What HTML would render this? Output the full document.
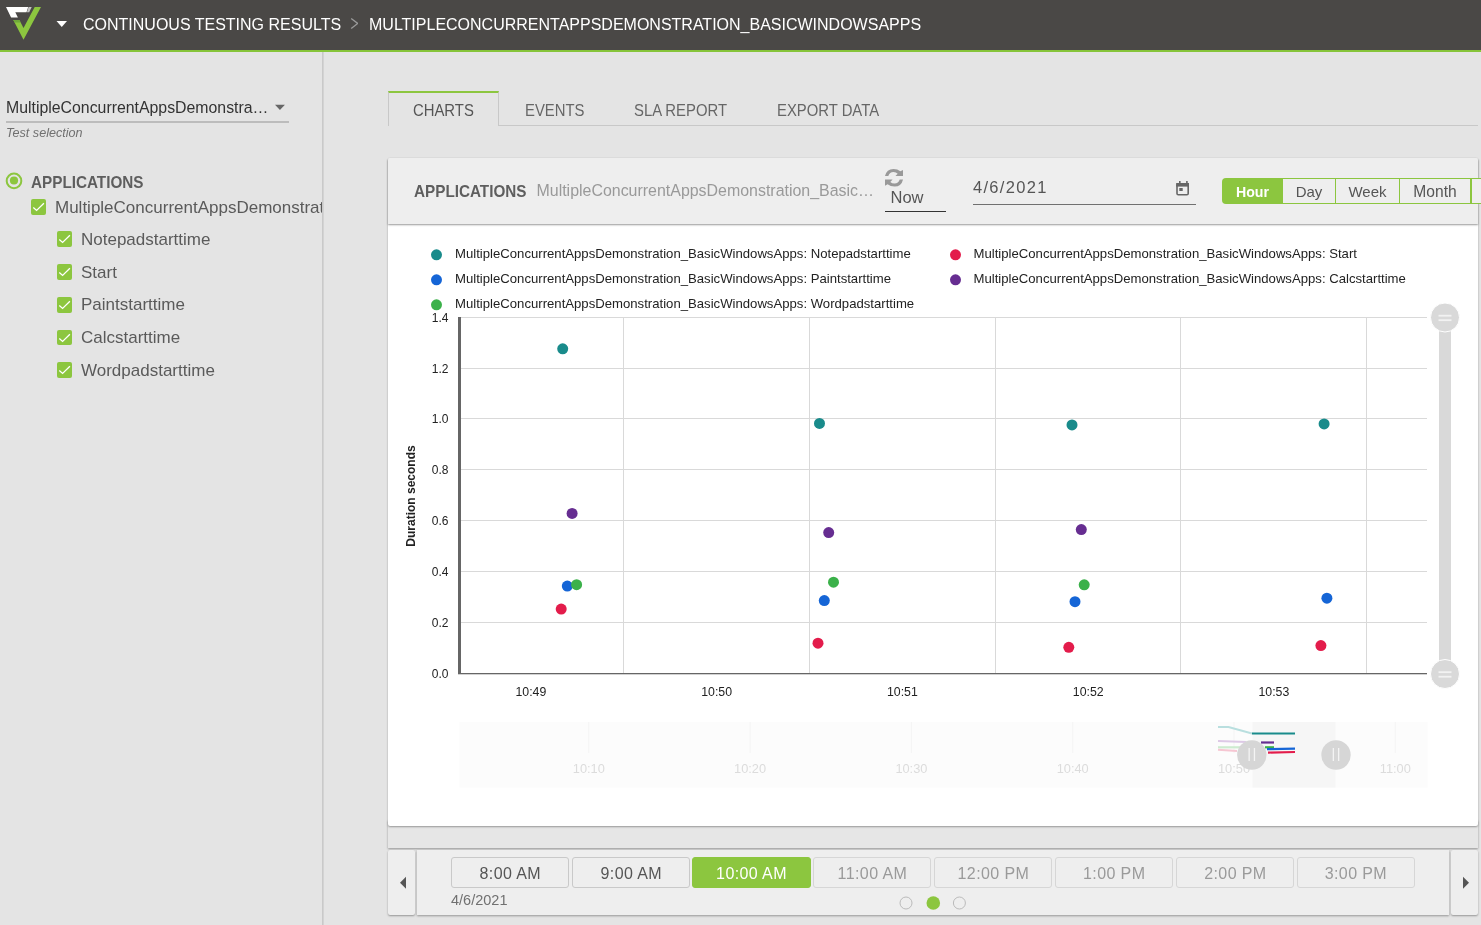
<!DOCTYPE html>
<html><head><meta charset="utf-8">
<style>
*{box-sizing:border-box;margin:0;padding:0}
html,body{width:1481px;height:925px;overflow:hidden;will-change:transform;background:#e4e4e4;font-family:"Liberation Sans",sans-serif;position:relative}
.a{position:absolute;white-space:nowrap}
.ht{color:#fff;font-size:16px;top:16px;line-height:18px}
.cb{width:15px;height:15.6px;background:#8cc63f;border-radius:2px}
.cb svg{position:absolute;left:0;top:0}
.si{font-size:17px;color:#5a5a5a;line-height:19px}
.tab{font-size:16.5px;color:#666;line-height:18px;top:101px;transform:scaleX(.9);transform-origin:0 0}
.tb{top:857px;height:31px;width:118px;border:1px solid #c9c9c9;border-radius:3px;background:#eeeeee;color:#555;font-size:16px;letter-spacing:0.4px;line-height:31px;text-align:center}
.tb.dis{color:#9a9a9a;border-color:#d6d6d6}
.pb{top:178px;height:26px;border:1px solid #8cc63f;border-left:none;background:#eeeeee;color:#555;font-size:15px;line-height:26px;text-align:center}
</style></head><body>
<div class="a" style="left:0;top:0;width:1481px;height:50px;background:#4a4846"></div>
<div class="a" style="left:0;top:50px;width:1481px;height:2px;background:#86c43a"></div>
<svg class="a" style="left:0;top:0" width="60" height="50" viewBox="0 0 60 50">
  <polygon points="6,7 28.2,7 26.5,12.2 15.3,12.2 17.9,17.6 11.1,17.6" fill="#fff"/><polygon points="28.6,7 31.7,7 29.2,12.2 26.9,12.2" fill="#c4c4c4"/>
  <polygon points="34.7,7 41,7 23.5,39.8 13.3,20 19.4,20 23.5,28" fill="#8cc63f"/><polygon points="13.3,20 19.4,20 20.7,22.6 14.6,22.6" fill="#6fa83a"/>
</svg>
<svg class="a" style="left:56px;top:20px" width="12" height="8"><polygon points="0.5,1 11,1 5.75,7" fill="#fff"/></svg>
<div class="a ht" style="left:83px">CONTINUOUS TESTING RESULTS</div>
<svg class="a" style="left:348px;top:17px" width="10" height="14"><polyline points="3.2,1.4 9.7,6.4 3.2,11.6" fill="none" stroke="#9a9a9a" stroke-width="1.3"/></svg>
<div class="a ht" style="left:369px">MULTIPLECONCURRENTAPPSDEMONSTRATION_BASICWINDOWSAPPS</div>
<div class="a" style="left:322px;top:52px;width:2px;height:873px;background:linear-gradient(90deg,#c4c4c4,#d8d8d8)"></div>
<div class="a si" style="left:6px;top:98px;color:#333;font-size:15.85px">MultipleConcurrentAppsDemonstra…</div>
<svg class="a" style="left:274px;top:104px" width="12" height="7"><polygon points="1,0.8 10.9,0.8 5.95,5.9" fill="#666"/></svg>
<div class="a" style="left:6px;top:121px;width:283px;height:2px;background:#bcbcbc"></div>
<div class="a" style="left:6px;top:126px;font-size:12.6px;line-height:14px;font-style:italic;color:#707070">Test selection</div>
<svg class="a" style="left:5px;top:171.5px" width="18" height="18"><circle cx="9" cy="8.9" r="7.3" fill="none" stroke="#8cc63f" stroke-width="2"/><circle cx="9" cy="8.5" r="4.1" fill="#8cc63f"/></svg>
<div class="a si" style="left:31px;top:172.5px;font-weight:bold;font-size:16.5px;color:#5e5e5e;transform:scaleX(.925);transform-origin:0 0">APPLICATIONS</div>
<div class="a" style="left:0;top:190px;width:322px;height:30px;overflow:hidden"><div class="a cb" style="left:31px;top:9px"><svg width="15" height="15"><polyline points="2.3,8.4 5.6,11.4 12.9,4.3" fill="none" stroke="#fff" stroke-width="1.3"/></svg></div><div class="a si" style="left:55px;top:8px">MultipleConcurrentAppsDemonstration_BasicWindowsApps</div></div>
<div class="a cb" style="left:57px;top:231.2px"><svg width="15" height="15"><polyline points="2.3,8.4 5.6,11.4 12.9,4.3" fill="none" stroke="#fff" stroke-width="1.3"/></svg></div>
<div class="a si" style="left:81px;top:230.4px">Notepadstarttime</div>
<div class="a cb" style="left:57px;top:264.0px"><svg width="15" height="15"><polyline points="2.3,8.4 5.6,11.4 12.9,4.3" fill="none" stroke="#fff" stroke-width="1.3"/></svg></div>
<div class="a si" style="left:81px;top:263.2px">Start</div>
<div class="a cb" style="left:57px;top:297.0px"><svg width="15" height="15"><polyline points="2.3,8.4 5.6,11.4 12.9,4.3" fill="none" stroke="#fff" stroke-width="1.3"/></svg></div>
<div class="a si" style="left:81px;top:295.4px">Paintstarttime</div>
<div class="a cb" style="left:57px;top:329.5px"><svg width="15" height="15"><polyline points="2.3,8.4 5.6,11.4 12.9,4.3" fill="none" stroke="#fff" stroke-width="1.3"/></svg></div>
<div class="a si" style="left:81px;top:327.9px">Calcstarttime</div>
<div class="a cb" style="left:57px;top:362.0px"><svg width="15" height="15"><polyline points="2.3,8.4 5.6,11.4 12.9,4.3" fill="none" stroke="#fff" stroke-width="1.3"/></svg></div>
<div class="a si" style="left:81px;top:361.2px">Wordpadstarttime</div>
<div class="a" style="left:388px;top:91px;width:111px;height:35px;border:1px solid #c8c8c8;border-bottom:none;border-top:2px solid #8cc63f;background:#e4e4e4"></div>
<div class="a" style="left:499px;top:125px;width:979px;height:1px;background:#c8c8c8"></div>
<div class="a tab" style="left:412.5px;color:#555">CHARTS</div>
<div class="a tab" style="left:525px">EVENTS</div>
<div class="a tab" style="left:634px">SLA REPORT</div>
<div class="a tab" style="left:777px">EXPORT DATA</div>
<div class="a" style="left:388px;top:820px;width:1090px;height:28px;background:#e6e6e6;box-shadow:0 1px 2px rgba(0,0,0,.35)"></div>
<div class="a" style="left:388px;top:158px;width:1090px;height:668px;background:#fff;box-shadow:0 1px 2px rgba(0,0,0,.35);border-radius:2px"></div>
<div class="a" style="left:388px;top:158px;width:1090px;height:66px;background:#eeeeee;box-shadow:0 1px 2px rgba(0,0,0,.4);border-radius:2px 2px 0 0"></div>
<div class="a" style="left:414px;top:182px;font-weight:bold;font-size:16.5px;line-height:18px;color:#5e5e5e;transform:scaleX(.925);transform-origin:0 0">APPLICATIONS</div>
<div class="a" style="left:536.5px;top:182px;font-size:15.95px;line-height:18px;color:#999">MultipleConcurrentAppsDemonstration_Basic…</div>
<svg class="a" style="left:878px;top:164px" width="32" height="28" viewBox="0 0 32 28">
<path id="rf" d="M6.97 12.12 Q8.6 5 15.45 5 Q19.6 5 22.4 7.3 L25 5.9 L25 12.12 L17.4 12.12 L19.7 9.7 Q18 8.03 15.45 8.03 Q11.6 8.1 10.3 12.12 Z" fill="#999"/>
<path d="M6.97 12.12 Q8.6 5 15.45 5 Q19.6 5 22.4 7.3 L25 5.9 L25 12.12 L17.4 12.12 L19.7 9.7 Q18 8.03 15.45 8.03 Q11.6 8.1 10.3 12.12 Z" fill="#999" transform="rotate(180 16 13.8)"/>
</svg>
<div class="a" style="left:890.5px;top:188px;font-size:16.5px;line-height:18px;color:#555">Now</div>
<div class="a" style="left:885px;top:211px;width:61px;height:1px;background:#333"></div>
<div class="a" style="left:973px;top:178px;font-size:16.5px;letter-spacing:1.3px;line-height:18px;color:#555">4/6/2021</div>
<div class="a" style="left:973px;top:204px;width:223px;height:1px;background:#707070"></div>
<svg class="a" style="left:1175px;top:180px" width="16" height="17" viewBox="0 0 16 17">
<rect x="2" y="3.8" width="11.2" height="10.9" rx="1.3" fill="none" stroke="#666" stroke-width="1.6"/>
<rect x="1.2" y="3" width="12.8" height="3.6" fill="#666"/>
<rect x="4" y="1" width="1.6" height="3" fill="#666"/><rect x="11.1" y="1" width="1.6" height="3" fill="#666"/>
<rect x="4.3" y="8" width="3.4" height="3" fill="#666"/>
</svg>
<div class="a" style="left:1222px;top:178px;width:61px;height:26px;background:#8cc63f;border-radius:4px 0 0 4px"></div><div class="a" style="left:1222px;top:178px;width:61px;height:26px;color:#fff;font-weight:bold;font-size:15px;line-height:27px;text-align:center;transform:scaleX(.943)">Hour</div>
<div class="a pb" style="left:1283px;width:53px">Day</div>
<div class="a pb" style="left:1336px;width:64px">Week</div>
<div class="a pb" style="left:1400px;width:71px;font-size:15.6px">Month</div>
<div class="a pb" style="left:1471px;width:20px;border-left:1px solid #8cc63f"></div>
<svg class="a" style="left:0;top:0" width="1481" height="925" viewBox="0 0 1481 925" font-family='"Liberation Sans",sans-serif'>
<circle cx="436.5" cy="254.8" r="5.5" fill="#198b8b"/>
<text x="455" y="258" font-size="13.15" fill="#222">MultipleConcurrentAppsDemonstration_BasicWindowsApps: Notepadstarttime</text>
<circle cx="955.5" cy="254.8" r="5.5" fill="#e31c4b"/>
<text x="973.5" y="258" font-size="13.15" fill="#222">MultipleConcurrentAppsDemonstration_BasicWindowsApps: Start</text>
<circle cx="436.5" cy="279.8" r="5.5" fill="#1565d6"/>
<text x="455" y="283.3" font-size="13.15" fill="#222">MultipleConcurrentAppsDemonstration_BasicWindowsApps: Paintstarttime</text>
<circle cx="955.5" cy="279.8" r="5.5" fill="#662d91"/>
<text x="973.5" y="283.3" font-size="13.15" fill="#222">MultipleConcurrentAppsDemonstration_BasicWindowsApps: Calcstarttime</text>
<circle cx="436.5" cy="304.8" r="5.5" fill="#3bb14a"/>
<text x="455" y="308.1" font-size="13.15" fill="#222">MultipleConcurrentAppsDemonstration_BasicWindowsApps: Wordpadstarttime</text>
<rect x="459" y="317" width="968" height="1" fill="#d9d9d9"/>
<rect x="459" y="368" width="968" height="1" fill="#d9d9d9"/>
<rect x="459" y="418" width="968" height="1" fill="#d9d9d9"/>
<rect x="459" y="469" width="968" height="1" fill="#d9d9d9"/>
<rect x="459" y="520" width="968" height="1" fill="#d9d9d9"/>
<rect x="459" y="571" width="968" height="1" fill="#d9d9d9"/>
<rect x="459" y="622" width="968" height="1" fill="#d9d9d9"/>
<rect x="623" y="317" width="1" height="356" fill="#d9d9d9"/>
<rect x="809" y="317" width="1" height="356" fill="#d9d9d9"/>
<rect x="995" y="317" width="1" height="356" fill="#d9d9d9"/>
<rect x="1180" y="317" width="1" height="356" fill="#d9d9d9"/>
<rect x="1366" y="317" width="1" height="356" fill="#d9d9d9"/>
<rect x="458" y="317" width="3" height="357" fill="#666"/>
<rect x="458" y="673" width="969" height="1.3" fill="#666"/>
<text x="448.5" y="322.1" font-size="12" fill="#222" text-anchor="end">1.4</text>
<text x="448.5" y="373.1" font-size="12" fill="#222" text-anchor="end">1.2</text>
<text x="448.5" y="423.1" font-size="12" fill="#222" text-anchor="end">1.0</text>
<text x="448.5" y="474.1" font-size="12" fill="#222" text-anchor="end">0.8</text>
<text x="448.5" y="525.1" font-size="12" fill="#222" text-anchor="end">0.6</text>
<text x="448.5" y="576.1" font-size="12" fill="#222" text-anchor="end">0.4</text>
<text x="448.5" y="627.1" font-size="12" fill="#222" text-anchor="end">0.2</text>
<text x="448.5" y="678.1" font-size="12" fill="#222" text-anchor="end">0.0</text>
<text x="530.9" y="696.2" font-size="12.3" fill="#222" text-anchor="middle">10:49</text>
<text x="716.6" y="696.2" font-size="12.3" fill="#222" text-anchor="middle">10:50</text>
<text x="902.4" y="696.2" font-size="12.3" fill="#222" text-anchor="middle">10:51</text>
<text x="1088.2" y="696.2" font-size="12.3" fill="#222" text-anchor="middle">10:52</text>
<text x="1273.9" y="696.2" font-size="12.3" fill="#222" text-anchor="middle">10:53</text>
<text transform="translate(415,496) rotate(-90)" font-size="12" font-weight="bold" fill="#222" text-anchor="middle">Duration seconds</text>
<circle cx="562.7" cy="348.8" r="5.5" fill="#198b8b"/>
<circle cx="572.1" cy="513.4" r="5.5" fill="#662d91"/>
<circle cx="567.3" cy="586.1" r="5.5" fill="#1565d6"/>
<circle cx="576.6" cy="584.7" r="5.5" fill="#3bb14a"/>
<circle cx="561.2" cy="609.1" r="5.5" fill="#e31c4b"/>
<circle cx="819.5" cy="423.4" r="5.5" fill="#198b8b"/>
<circle cx="828.7" cy="532.6" r="5.5" fill="#662d91"/>
<circle cx="833.5" cy="582.2" r="5.5" fill="#3bb14a"/>
<circle cx="824.3" cy="600.6" r="5.5" fill="#1565d6"/>
<circle cx="818" cy="643.2" r="5.5" fill="#e31c4b"/>
<circle cx="1072" cy="424.9" r="5.5" fill="#198b8b"/>
<circle cx="1081.3" cy="529.6" r="5.5" fill="#662d91"/>
<circle cx="1084.2" cy="584.8" r="5.5" fill="#3bb14a"/>
<circle cx="1075" cy="601.7" r="5.5" fill="#1565d6"/>
<circle cx="1068.8" cy="647.3" r="5.5" fill="#e31c4b"/>
<circle cx="1324.1" cy="423.9" r="5.5" fill="#198b8b"/>
<circle cx="1326.9" cy="598.2" r="5.5" fill="#1565d6"/>
<circle cx="1320.9" cy="645.6" r="5.5" fill="#e31c4b"/>
<rect x="1439" y="318" width="12" height="356" fill="#d9d9d9"/>
<circle cx="1445" cy="317.5" r="14.5" fill="#d9d9d9" stroke="#fff" stroke-width="1"/>
<rect x="1438.5" y="314.8" width="13" height="1.8" fill="#f2f2f2"/><rect x="1438.5" y="319.3" width="13" height="1.8" fill="#f2f2f2"/>
<circle cx="1445" cy="674" r="14.5" fill="#d9d9d9" stroke="#fff" stroke-width="1"/>
<rect x="1438.5" y="671.3" width="13" height="1.8" fill="#f2f2f2"/><rect x="1438.5" y="675.8" width="13" height="1.8" fill="#f2f2f2"/>
<rect x="459.5" y="722" width="968" height="65.5" fill="#fcfcfc"/>
<rect x="1252.5" y="722" width="83" height="65.5" fill="#f6f6f6"/>
<rect x="588.3" y="722" width="1" height="31" fill="#f4f4f4"/>
<rect x="749.6" y="722" width="1" height="31" fill="#f4f4f4"/>
<rect x="910.9" y="722" width="1" height="31" fill="#f4f4f4"/>
<rect x="1072.2" y="722" width="1" height="31" fill="#f4f4f4"/>
<rect x="1233.5" y="722" width="1" height="31" fill="#f4f4f4"/>
<rect x="1394.8" y="722" width="1" height="31" fill="#f4f4f4"/>
<text x="588.8" y="773" font-size="12.8" fill="#dcdcdc" text-anchor="middle">10:10</text>
<text x="750.1" y="773" font-size="12.8" fill="#dcdcdc" text-anchor="middle">10:20</text>
<text x="911.4" y="773" font-size="12.8" fill="#dcdcdc" text-anchor="middle">10:30</text>
<text x="1072.7" y="773" font-size="12.8" fill="#dcdcdc" text-anchor="middle">10:40</text>
<text x="1234.0" y="773" font-size="12.8" fill="#dcdcdc" text-anchor="middle">10:50</text>
<text x="1395.3" y="773" font-size="12.8" fill="#dcdcdc" text-anchor="middle">11:00</text>
<polyline points="1218,727 1228.5,727 1252,733.5" fill="none" stroke="#b9dfdf" stroke-width="2"/>
<polyline points="1252,733.5 1295,733.5" fill="none" stroke="#198b8b" stroke-width="2.2"/>
<polyline points="1218,741 1246,742" fill="none" stroke="#ddc9e6" stroke-width="2"/>
<polyline points="1261,742.5 1274,742.5" fill="none" stroke="#662d91" stroke-width="2.2"/>
<polyline points="1218,747.3 1240,747.3" fill="none" stroke="#cdebd0" stroke-width="2.2"/>
<polyline points="1265,747.3 1274,747.3" fill="none" stroke="#3bb14a" stroke-width="2.2"/>
<polyline points="1267,749.2 1295,748.6" fill="none" stroke="#1565d6" stroke-width="2.2"/>
<polyline points="1218,749.8 1237,751" fill="none" stroke="#f6c6d2" stroke-width="2"/>
<polyline points="1268,752.6 1295,752" fill="none" stroke="#e31c4b" stroke-width="2.2"/>
<circle cx="1251.8" cy="755" r="14.7" fill="#d6d6d6"/>
<rect x="1248.5" y="748" width="1.3" height="13" fill="#f4f4f4"/><rect x="1253.8" y="748" width="1.3" height="13" fill="#f4f4f4"/>
<circle cx="1336" cy="755" r="14.7" fill="#d6d6d6"/>
<rect x="1332.7" y="748" width="1.3" height="13" fill="#f4f4f4"/><rect x="1338" y="748" width="1.3" height="13" fill="#f4f4f4"/>
</svg>
<div class="a" style="left:388px;top:850px;width:27px;height:65px;background:#eeeeee;box-shadow:0 1px 2px rgba(0,0,0,.35);border-radius:2px"></div>
<div class="a" style="left:417px;top:850px;width:1032px;height:65px;background:#eeeeee;box-shadow:0 1px 2px rgba(0,0,0,.35)"></div>
<div class="a" style="left:1451px;top:850px;width:27px;height:65px;background:#eeeeee;box-shadow:0 1px 2px rgba(0,0,0,.35);border-radius:2px"></div>
<svg class="a" style="left:398px;top:876px" width="10" height="14"><polygon points="2,6.8 8,0.8 8,12.8" fill="#555"/></svg>
<svg class="a" style="left:1460px;top:876px" width="10" height="14"><polygon points="9,6.8 3,0.8 3,12.8" fill="#555"/></svg>
<div class="a tb" style="left:451.3px">8:00 AM</div>
<div class="a tb" style="left:572.3px">9:00 AM</div>
<div class="a tb" style="left:692px;width:119px;background:#8cc63f;border-color:#8cc63f;color:#fff">10:00 AM</div>
<div class="a tb dis" style="left:813.4px">11:00 AM</div>
<div class="a tb dis" style="left:934.4px">12:00 PM</div>
<div class="a tb dis" style="left:1055.2px">1:00 PM</div>
<div class="a tb dis" style="left:1176.4px">2:00 PM</div>
<div class="a tb dis" style="left:1296.9px">3:00 PM</div>
<div class="a" style="left:451px;top:892.2px;font-size:14.5px;line-height:16px;color:#707070">4/6/2021</div>
<svg class="a" style="left:895px;top:893px" width="75" height="20"><circle cx="11" cy="10" r="6" fill="none" stroke="#bbb" stroke-width="1"/><circle cx="38.3" cy="10" r="6.8" fill="#8cc63f"/><circle cx="64.4" cy="10" r="6" fill="none" stroke="#bbb" stroke-width="1"/></svg>
</body></html>
